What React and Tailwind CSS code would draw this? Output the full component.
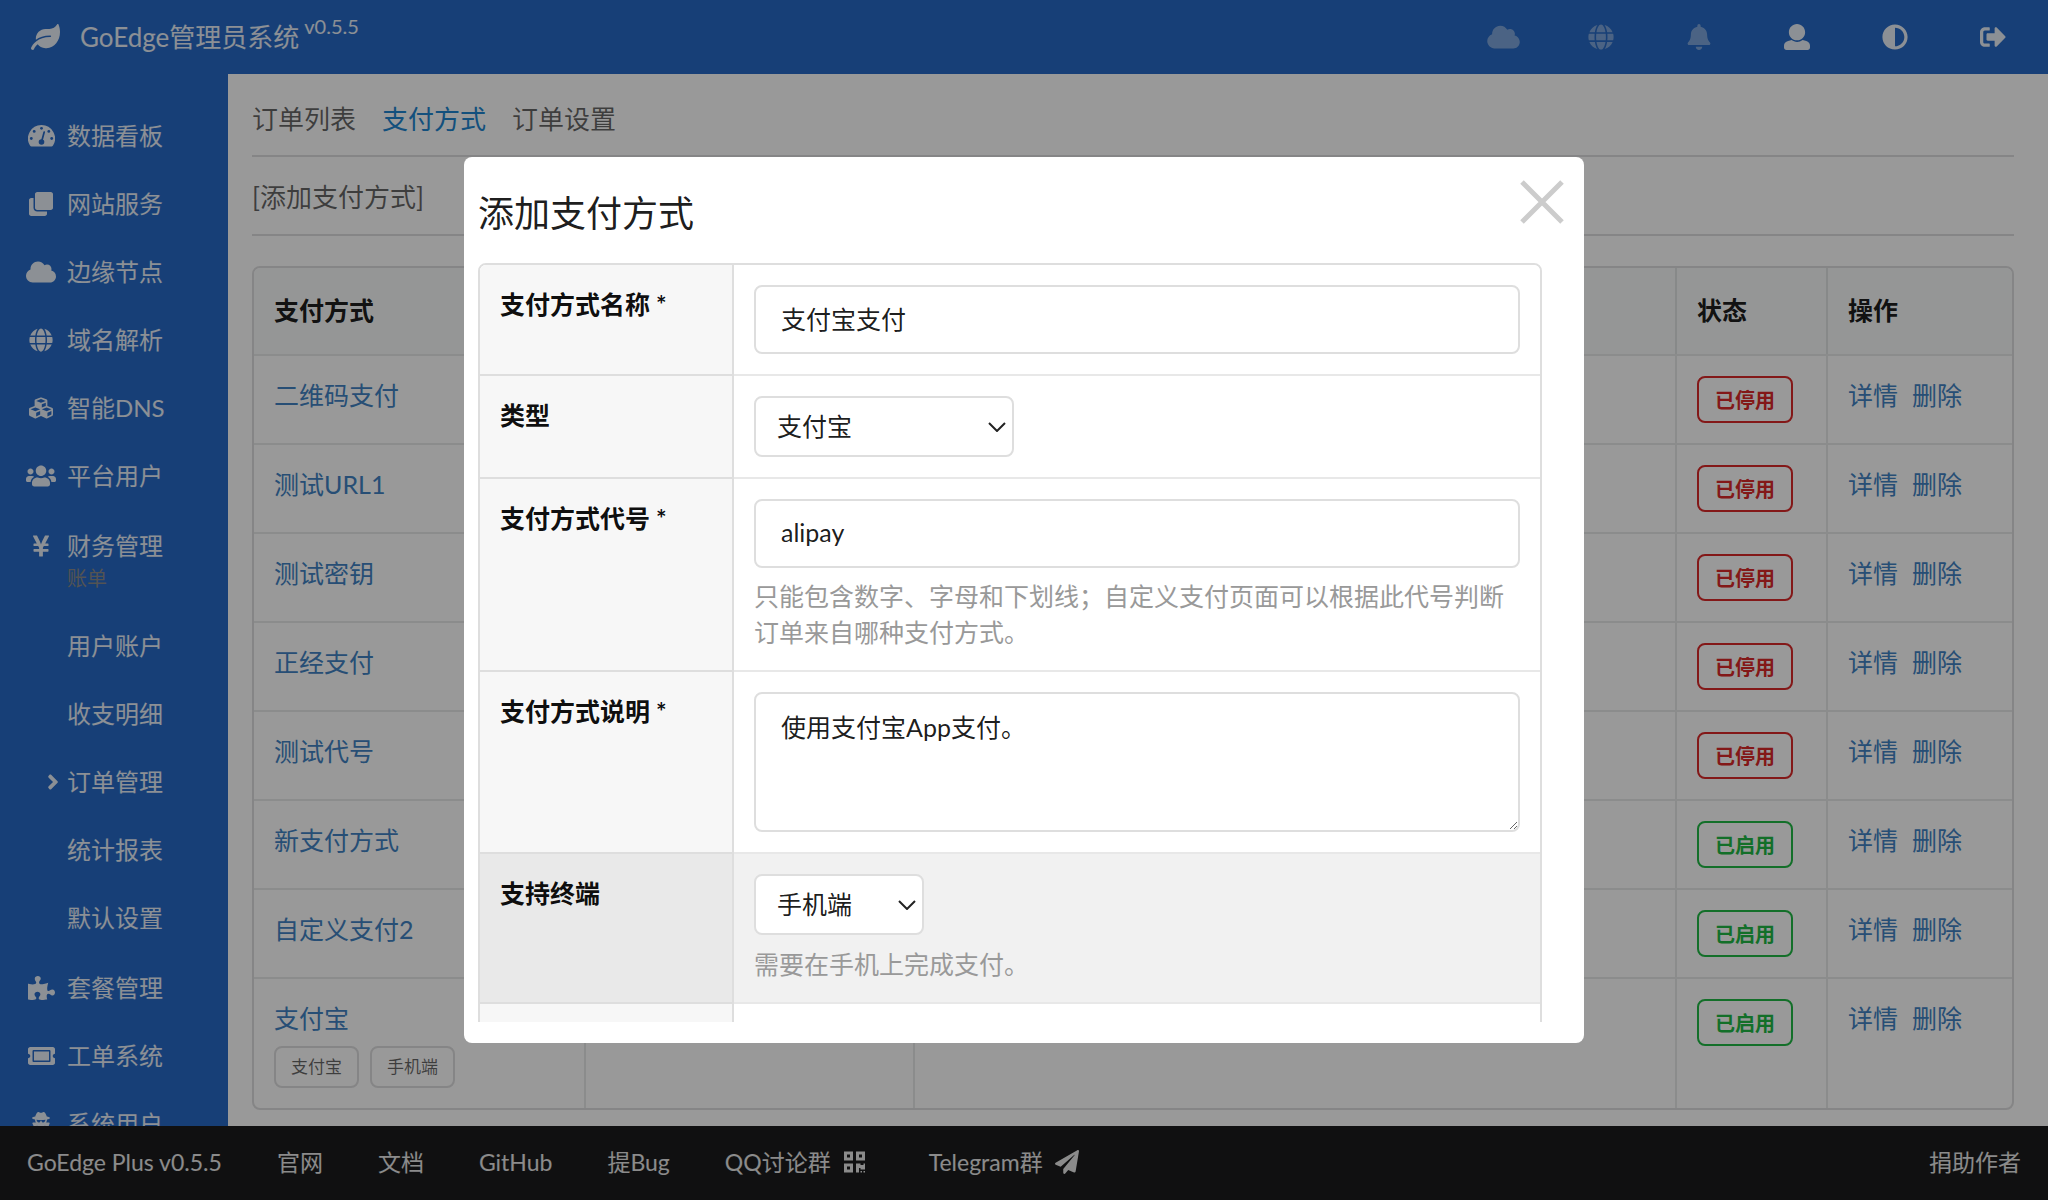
import React from "react";
import {
  FaAdjust,
  FaAngleRight,
  FaBell,
  FaClone,
  FaCloud,
  FaCubes,
  FaGlobe,
  FaLeaf,
  FaPaperPlane,
  FaPuzzlePiece,
  FaQrcode,
  FaSignOutAlt,
  FaTicketAlt,
  FaUserSecret,
  FaUsers,
  FaYenSign,
} from "react-icons/fa";

function UserIcon({ className }) {
  return (
    <svg viewBox="0 0 512 512" fill="currentColor" className={className} aria-hidden="true">
      <path d="M256 0c88.366 0 160 71.634 160 160s-71.634 160-160 160S96 248.366 96 160 167.634 0 256 0zm183.283 333.821l-71.313-17.828c-74.923 53.89-165.738 41.864-215.94 0l-71.313 17.828C29.981 344.505 0 382.903 0 426.955V464c0 26.51 21.49 48 48 48h416c26.51 0 48-21.49 48-48v-37.045c0-44.052-29.981-82.45-72.717-93.134z" />
    </svg>
  );
}

function DialIcon({ className }) {
  return (
    <svg viewBox="0 0 27 22" className={className} aria-hidden="true">
      <path
        fill="currentColor"
        d="M13.5 0A13.5 13.5 0 0 0 2 20.6c.4.6.9.9 1.6.9h19.8c.7 0 1.200-.3 1.600-.9A13.500 13.500 0 0 0 13.500 0z"
      />
      <g fill="#276ac6">
        <circle cx="3.300" cy="13.500" r="1.400" />
        <circle cx="6.200" cy="6.400" r="1.400" />
        <circle cx="13.500" cy="3.300" r="1.400" />
        <circle cx="20.800" cy="6.400" r="1.400" />
        <circle cx="23.700" cy="13.500" r="1.400" />
        <circle cx="13.500" cy="17" r="2.800" />
      </g>
      <path d="M13.800 16L16.200 7" stroke="#276ac6" strokeWidth="1.700" strokeLinecap="round" />
    </svg>
  );
}

const headerActions = [
  { label: "节点", icon: <FaCloud className="h-[26px] w-[33px]" />, dim: true },
  { label: "域名", icon: <FaGlobe className="size-[26px]" />, dim: true },
  { label: "消息", icon: <FaBell className="size-[26px]" />, dim: true },
  { label: "个人资料", icon: <UserIcon className="size-[26px]" /> },
  { label: "切换主题", icon: <FaAdjust className="size-[26px]" /> },
  { label: "退出登录", icon: <FaSignOutAlt className="size-[26px]" /> },
];

const menuTop = [
  { name: "数据看板", icon: <DialIcon className="h-[22px] w-[27px] shrink-0" /> },
  { name: "网站服务", icon: <FaClone className="size-6 shrink-0" /> },
  { name: "边缘节点", icon: <FaCloud className="h-6 w-[30px] shrink-0" /> },
  { name: "域名解析", icon: <FaGlobe className="size-6 shrink-0" /> },
  { name: "智能DNS", icon: <FaCubes className="size-6 shrink-0" /> },
  { name: "平台用户", icon: <FaUsers className="h-6 w-[30px] shrink-0" /> },
];

const subMenu = ["用户账户", "收支明细", "订单管理", "统计报表", "默认设置"];

const menuBottom = [
  { name: "套餐管理", icon: <FaPuzzlePiece className="h-6 w-[27px] shrink-0" /> },
  { name: "工单系统", icon: <FaTicketAlt className="h-6 w-[27px] shrink-0" /> },
  { name: "系统用户", icon: <FaUserSecret className="size-6 shrink-0" /> },
];

const methods = [
  { name: "二维码支付", on: false },
  { name: "测试URL1", on: false },
  { name: "测试密钥", on: false },
  { name: "正经支付", on: false },
  { name: "测试代号", on: false },
  { name: "新支付方式", on: true },
  { name: "自定义支付2", on: true },
  { name: "支付宝", on: true, tags: ["支付宝", "手机端"] },
];

function Header() {
  return (
    <header className="flex h-[74px] shrink-0 items-center justify-between bg-[#276ac6] pr-1.5 pl-[31px] text-white/90">
      <a href="#" className="flex items-center gap-5 text-[26px] leading-[34px]">
        <FaLeaf className="h-[26px] w-[29px]" />
        <span className="flex items-start gap-[5px]">
          GoEdge管理员系统
          <span className="-mt-1.5 text-xl leading-6">v0.5.5</span>
        </span>
      </a>
      <nav className="flex">
        {headerActions.map((a) => (
          <button
            key={a.label}
            aria-label={a.label}
            className={`flex h-[74px] w-[98px] items-center justify-center ${a.dim ? "opacity-45" : ""}`}
          >
            {a.icon}
          </button>
        ))}
      </nav>
    </header>
  );
}

function MenuLink({ icon, children }) {
  return (
    <a href="#" className="flex h-[68px] items-center gap-3 pl-[27px]">
      <span className="flex w-7 justify-center">{icon}</span>
      {children}
    </a>
  );
}

function Sidebar() {
  return (
    <nav className="w-[228px] shrink-0 overflow-y-auto bg-[#276ac6] pt-7 text-2xl leading-8 text-white/90 [scrollbar-width:none]">
      <div className="pb-[2px]">
        {menuTop.map((m) => (
          <MenuLink key={m.name} icon={m.icon}>
            {m.name}
          </MenuLink>
        ))}
      </div>
      <a href="#" className="flex h-[100px] gap-3 pt-[18px] pl-[27px]">
        <span className="flex h-8 w-7 items-center justify-center">
          <FaYenSign className="size-6 shrink-0" />
        </span>
        <span className="flex flex-col">
          财务管理
          <small className="text-xl leading-8 text-[#8a8a8a]">账单</small>
        </span>
      </a>
      <div className="pb-[2px]">
        {subMenu.map((name) => (
          <a key={name} href="#" className="flex h-[68px] items-center pl-[67px]">
            {name === "订单管理" && <FaAngleRight className="-ml-7 h-6 w-7" />}
            {name}
          </a>
        ))}
      </div>
      {menuBottom.map((m) => (
        <MenuLink key={m.name} icon={m.icon}>
          {m.name}
        </MenuLink>
      ))}
    </nav>
  );
}

function StatusLabel({ on }) {
  return (
    <span
      className={`inline-flex h-[47px] items-center rounded-lg border-2 px-4 text-xl leading-6 font-bold ${
        on ? "border-[#21ba45] text-[#21ba45]" : "border-[#db2828] text-[#db2828]"
      }`}
    >
      {on ? "已启用" : "已停用"}
    </span>
  );
}

function MethodsTable() {
  const th = "border-l-2 border-[#222426]/10 px-5 pb-[3px] text-left font-bold first:border-l-0";
  const td = "border-t-2 border-l-2 border-[#222426]/10 px-5 align-top first:border-l-0";
  return (
    <div className="mt-[30px] overflow-hidden rounded-lg border-2 border-[#222426]/15">
      <table className="w-full table-fixed border-separate border-spacing-0 text-[25px] leading-9 text-black/90">
        <colgroup>
          <col className="w-[330px]" />
          <col className="w-[329px]" />
          <col />
          <col className="w-[151px]" />
          <col className="w-[186px]" />
        </colgroup>
        <thead>
          <tr className="h-[86px] bg-[#f9fafb]">
            <th className={th}>支付方式</th>
            <th className={th} />
            <th className={th} />
            <th className={th}>状态</th>
            <th className={th}>操作</th>
          </tr>
        </thead>
        <tbody>
          {methods.map((m) => (
            <tr key={m.name} className="h-[89px]">
              <td className={td}>
                <a href="#" className="mt-[21px] block text-[#4183c4]">
                  {m.name}
                </a>
                {m.tags && (
                  <div className="mt-[10px] mb-5 flex gap-[11px]">
                    {m.tags.map((t) => (
                      <span
                        key={t}
                        className="flex h-[42px] items-center rounded-lg border-2 border-[#222426]/15 px-[15px] text-[17px] leading-6 text-black/60"
                      >
                        {t}
                      </span>
                    ))}
                  </div>
                )}
              </td>
              <td className={td} />
              <td className={td} />
              <td className={td}>
                <div className="mt-5 flex">
                  <StatusLabel on={m.on} />
                </div>
              </td>
              <td className={td}>
                <div className="mt-[21px] flex gap-[14px] text-[#4183c4]">
                  <a href="#">详情</a>
                  <a href="#">删除</a>
                </div>
              </td>
            </tr>
          ))}
        </tbody>
      </table>
    </div>
  );
}

function Footer() {
  const item = "flex items-center px-[27px]";
  return (
    <footer className="flex h-[74px] shrink-0 items-center justify-between bg-[#1b1c1d] pb-[2px] text-[23px] leading-8 text-white/90">
      <div className="flex gap-px">
        <a href="#" className={item}>GoEdge Plus v0.5.5</a>
        <a href="#" className={item}>官网</a>
        <a href="#" className={item}>文档</a>
        <a href="#" className={item}>GitHub</a>
        <a href="#" className={item}>提Bug</a>
        <a href="#" className={item}>
          QQ讨论群
          <FaQrcode className="mr-2 ml-3 h-6 w-[23px]" />
        </a>
        <a href="#" className={item}>
          Telegram群
          <FaPaperPlane className="ml-3 size-6" />
        </a>
      </div>
      <a href="#" className={item}>捐助作者</a>
    </footer>
  );
}

function SelectBox({ id, value, children, wide }) {
  return (
    <div className={`relative h-[61px] ${wide ? "w-[260px]" : "w-[170px]"}`}>
      <select
        id={id}
        defaultValue={value}
        className="size-full appearance-none rounded-lg border-2 border-[#dedede] bg-white pb-[2px] pl-[21px] text-black/90"
      >
        {children}
      </select>
      <svg
        viewBox="0 0 18 10"
        fill="none"
        stroke="#222"
        strokeWidth="2"
        className="pointer-events-none absolute top-[26px] right-2 h-[10px] w-[18px]"
        aria-hidden="true"
      >
        <path d="M1 1l8 8 8-8" />
      </svg>
    </div>
  );
}

function FormRow({ id, label, required, active, children }) {
  return (
    <tr className={active ? "bg-[#f1f1f1]" : "bg-white"}>
      <th
        className={`border-r-2 border-b-2 border-[#dedede] px-5 py-[21px] text-left align-top font-bold text-black/95 ${
          active ? "bg-[#e9e9e9]" : "bg-[#f7f7f7]"
        }`}
      >
        <label htmlFor={id}>
          {label}
          {required && " *"}
        </label>
      </th>
      <td className="border-b-2 border-[#e8e8e8] px-5 py-5 align-top">{children}</td>
    </tr>
  );
}

function Modal() {
  const field = "block w-full rounded-lg border-2 border-[#dedede] bg-white px-[25px] text-black/90";
  const hint = "text-[#999999]";
  return (
    <div className="fixed inset-0 flex items-center justify-center bg-black/40">
      <div
        role="dialog"
        aria-modal="true"
        aria-labelledby="dialog-title"
        className="relative flex h-[886px] max-h-full w-full max-w-[1120px] flex-col rounded-lg bg-white pr-[42px] pb-[21px] pl-[14px]"
      >
        <button aria-label="关闭" className="absolute top-[23px] right-5 text-[#cccccc]">
          <svg viewBox="0 0 44 44" fill="none" stroke="currentColor" strokeWidth="5" className="size-11">
            <path d="M2 2l40 40M42 2L2 42" />
          </svg>
        </button>
        <div className="min-h-0 grow overflow-y-auto [scrollbar-width:none]">
          <h2 id="dialog-title" className="pt-8 pb-[26px] text-4xl leading-[48px] text-black/90">
            添加支付方式
          </h2>
          <div className="overflow-hidden rounded-lg border-2 border-[#dedede]">
            <table className="w-full table-fixed border-separate border-spacing-0 text-[25px] leading-9">
              <colgroup>
                <col className="w-[254px]" />
                <col />
              </colgroup>
              <tbody>
                <FormRow id="name" label="支付方式名称" required>
                  <input id="name" type="text" defaultValue="支付宝支付" className={`${field} h-[69px] pb-[3px]`} />
                </FormRow>
                <FormRow id="type" label="类型">
                  <SelectBox id="type" value="alipay" wide>
                    <option value="alipay">支付宝</option>
                  </SelectBox>
                </FormRow>
                <FormRow id="code" label="支付方式代号" required>
                  <input id="code" type="text" defaultValue="alipay" className={`${field} h-[69px] pb-[3px]`} />
                  <p className={`mt-[10px] ${hint}`}>
                    只能包含数字、字母和下划线；自定义支付页面可以根据此代号判断订单来自哪种支付方式。
                  </p>
                </FormRow>
                <FormRow id="desc" label="支付方式说明" required>
                  <textarea
                    id="desc"
                    defaultValue="使用支付宝App支付。"
                    className={`${field} h-[140px] resize-y py-[15px]`}
                  />
                </FormRow>
                <FormRow id="client" label="支持终端" active>
                  <SelectBox id="client" value="mobile">
                    <option value="mobile">手机端</option>
                  </SelectBox>
                  <p className={`mt-[11px] ${hint}`}>需要在手机上完成支付。</p>
                </FormRow>
                <FormRow />
              </tbody>
            </table>
          </div>
        </div>
      </div>
    </div>
  );
}

export default function App() {
  return (
    <div className="flex h-screen flex-col overflow-hidden bg-white font-['Lato','Noto_Sans_CJK_SC',sans-serif]">
      <Header />
      <div className="flex min-h-0 grow">
        <Sidebar />
        <main className="min-w-0 grow overflow-hidden pr-[34px] pl-6 text-[26px] leading-[34px] text-black/60">
          <nav className="flex gap-[26px] border-b-2 border-[#222426]/15 pt-7 pb-[19px]">
            <a href="#">订单列表</a>
            <a href="#" className="text-[#2185d0]">支付方式</a>
            <a href="#">订单设置</a>
          </nav>
          <div className="border-b-2 border-[#222426]/15 pt-[23px] pb-5">
            <a href="#">[添加支付方式]</a>
          </div>
          <MethodsTable />
        </main>
      </div>
      <Footer />
      <Modal />
    </div>
  );
}
